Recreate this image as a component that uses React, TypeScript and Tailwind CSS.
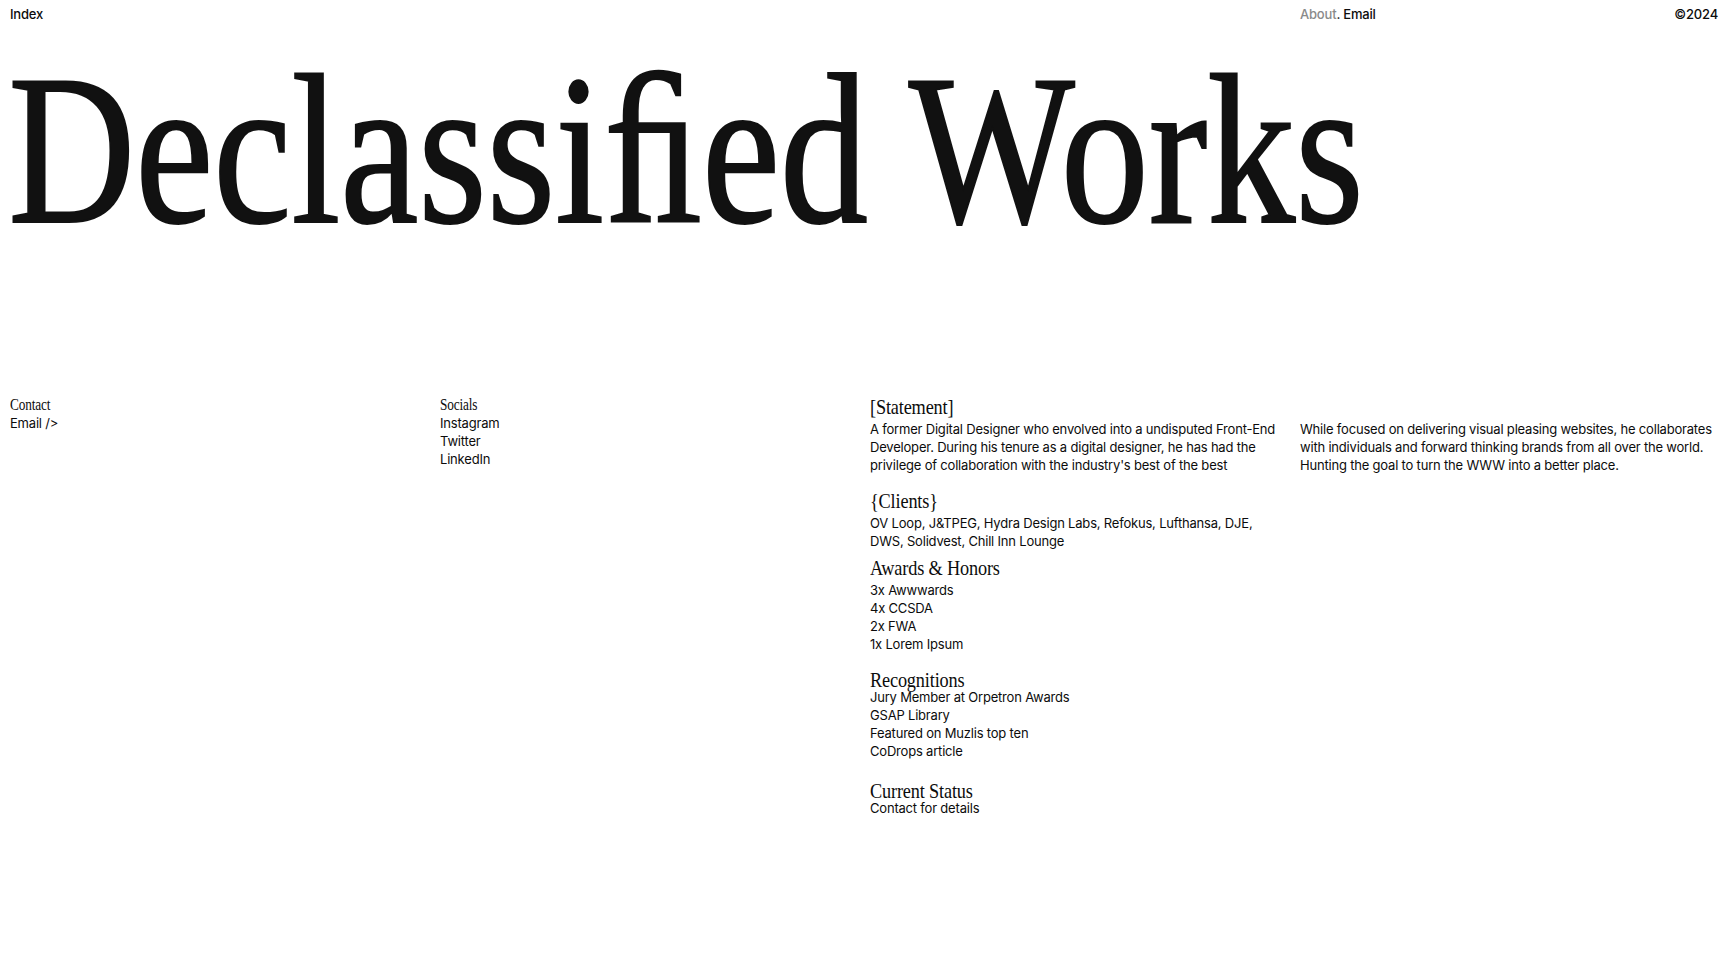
const serif = "font-[family-name:'Liberation_Serif',serif]";

function Label({ children }: { children: React.ReactNode }) {
  return (
    <div className="h-[18px]">
      <span className={`${serif} inline-block origin-left scale-x-[0.83] text-[16px] leading-[18px]`}>{children}</span>
    </div>
  );
}

function Heading({ children, tall = true }: { children: React.ReactNode; tall?: boolean }) {
  return (
    <div className={tall ? "h-[24px]" : "h-[19px]"}>
      <span className={`${serif} inline-block origin-left scale-x-[0.83] text-[22px] leading-[22px]`}>{children}</span>
    </div>
  );
}

const awards = ["3x Awwwards", "4x CCSDA", "2x FWA", "1x Lorem Ipsum"];
const recognitions = ["Jury Member at Orpetron Awards", "GSAP Library", "Featured on Muzlis top ten", "CoDrops article"];

export default function App() {
  return (
    <div className="min-h-screen bg-white font-[family-name:Inter,sans-serif] text-[13px] leading-[18px] tracking-[-0.015em] text-[#0c0c0c]">
      <header className="grid grid-cols-4 gap-3 px-[10px] pt-[5px] font-medium">
        <div>Index</div>
        <div />
        <div />
        <div className="flex justify-between">
          <span>
            <span className="text-[#8a8a8a]">About</span>. Email
          </span>
          <span>©2024</span>
        </div>
      </header>

      <h1
        className={`${serif} mt-[20px] origin-left scale-x-[0.822] whitespace-nowrap pl-[10px] text-[214px] leading-none font-normal tracking-normal text-[#111] [-webkit-text-stroke:2px_#111]`}
      >
        Declassiﬁed Works
      </h1>

      <section className="mt-[139px] grid grid-cols-4 gap-3 px-[10px]">
        <div>
          <Label>Contact</Label>
          <div>Email /&gt;</div>
        </div>

        <div>
          <Label>Socials</Label>
          <ul>
            <li>Instagram</li>
            <li>Twitter</li>
            <li>LinkedIn</li>
          </ul>
        </div>

        <div>
          <Heading>[Statement]</Heading>
          <p>
            A former Digital Designer who envolved into a undisputed Front-End Developer. During his tenure as a digital
            designer, he has had the privilege of collaboration with the industry's best of the best
          </p>

          <div className="mt-[16px]">
            <Heading>{"{Clients}"}</Heading>
            <p>OV Loop, J&amp;TPEG, Hydra Design Labs, Refokus, Lufthansa, DJE, DWS, Solidvest, Chill Inn Lounge</p>
          </div>

          <div className="mt-[7px]">
            <Heading>Awards &amp; Honors</Heading>
            <ul>
              {awards.map((a) => (
                <li key={a}>{a}</li>
              ))}
            </ul>
          </div>

          <div className="mt-[16px]">
            <Heading tall={false}>Recognitions</Heading>
            <ul>
              {recognitions.map((r) => (
                <li key={r}>{r}</li>
              ))}
            </ul>
          </div>

          <div className="mt-[20px]">
            <Heading tall={false}>Current Status</Heading>
            <p>Contact for details</p>
          </div>
        </div>

        <div className="pt-[24px]">
          <p>
            While focused on delivering visual pleasing websites, he collaborates with individuals and forward thinking
            brands from all over the world. Hunting the goal to turn the WWW into a better place.
          </p>
        </div>
      </section>
    </div>
  );
}
